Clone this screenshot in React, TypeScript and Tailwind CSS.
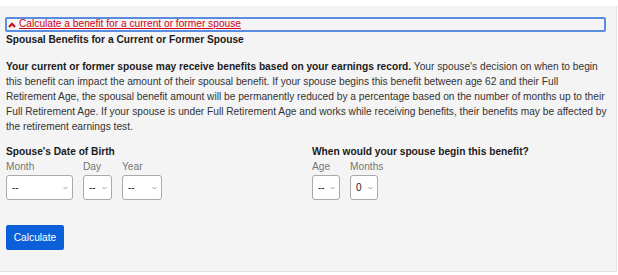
import React from "react";

const dobFields = [
  { label: "Month", value: "--", width: "w-[67px]" },
  { label: "Day", value: "--", width: "w-[29px]" },
  { label: "Year", value: "--", width: "w-[40px]" },
];

const startFields = [
  { label: "Age", value: "--", width: "w-[28px]" },
  { label: "Months", value: "0", width: "w-[28px]" },
];

function FakeSelect({ value, width }: { value: string; width: string }) {
  return (
    <div
      className={`flex h-[25px] ${width} items-center justify-between rounded-[3px] border border-[#a9a9a9] bg-white pl-[5px] pr-[4px] text-[10px] text-[#222]`}
    >
      <span className="leading-none">{value}</span>
      <svg width="5" height="4" viewBox="0 0 5 4" className="shrink-0">
        <polyline points="0.5,1 2.5,3 4.5,1" fill="none" stroke="#8a8a8a" strokeWidth="0.8" />
      </svg>
    </div>
  );
}

function FieldGroup({ title, fields }: { title: string; fields: typeof dobFields }) {
  return (
    <div className="flex flex-col">
      <h3 className="text-[10.2px] font-bold leading-[12px] text-[#1b1b1b]">{title}</h3>
      <div className="mt-[3px] flex gap-[10px]">
        {fields.map((f) => (
          <div key={f.label} className="flex flex-col gap-[2px]">
            <span className="text-[10.2px] leading-[12px] text-[#767676]">{f.label}</span>
            <FakeSelect value={f.value} width={f.width} />
          </div>
        ))}
      </div>
    </div>
  );
}

export default function App() {
  return (
    <div className="h-[275px] w-[618px] bg-white pt-[6px] font-['Liberation_Sans',Arial,sans-serif]">
      <div className="h-[266px] w-[617px] border-r border-b border-[#e2e2e2] bg-[#f4f4f4] pl-[5px] pt-[11px]">
        <button className="flex h-[15px] w-[601px] items-center gap-[3px] rounded-[2px] border-2 border-[#5a8de0] pl-[1px] text-[10.2px] text-[#d0021b]">
          <svg width="8" height="6" viewBox="0 0 8 6" className="shrink-0">
            <polyline points="1,5 4,1.8 7,5" fill="none" stroke="#d0021b" strokeWidth="2" />
          </svg>
          <span className="leading-none underline">Calculate a benefit for a current or former spouse</span>
        </button>
        <div className="pl-[1px]">
          <h2 className="mt-[2px] text-[10.2px] font-bold leading-[12px] text-[#1b1b1b]">
            Spousal Benefits for a Current or Former Spouse
          </h2>
          <p className="mt-[13px] w-[610px] text-[10.2px] leading-[15px] text-[#333]">
            <b className="text-[#1b1b1b]">Your current or former spouse may receive benefits based on your earnings record.</b>{" "}
            Your spouse's decision on when to begin
            <br />
            this benefit can impact the amount of their spousal benefit. If your spouse begins this benefit between age 62 and their Full
            <br />
            Retirement Age, the spousal benefit amount will be permanently reduced by a percentage based on the number of months up to their
            <br />
            Full Retirement Age. If your spouse is under Full Retirement Age and works while receiving benefits, their benefits may be affected by
            <br />
            the retirement earnings test.
          </p>
          <div className="mt-[12px] grid w-[602px] grid-cols-[306px_1fr]">
            <FieldGroup title="Spouse's Date of Birth" fields={dobFields} />
            <FieldGroup title="When would your spouse begin this benefit?" fields={startFields} />
          </div>
          <button className="mt-[25px] h-[25px] w-[58px] rounded-[2px] bg-[#0b5fd8] text-[10.2px] text-white">
            Calculate
          </button>
        </div>
      </div>
    </div>
  );
}
